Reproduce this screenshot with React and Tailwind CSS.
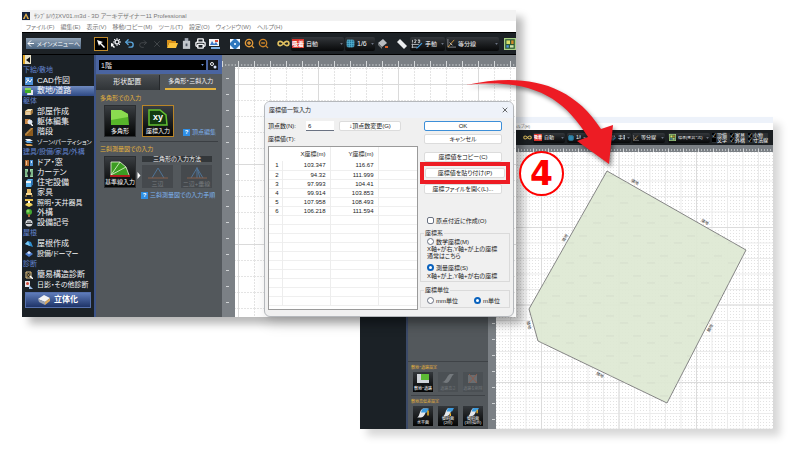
import React, { useState } from "react";
import {
  Settings,
  Undo2,
  Redo2,
  X,
  Printer,
  ZoomIn,
  ZoomOut,
  Infinity as InfinityIcon,
  Grid3x3,
} from "lucide-react";

const MENU = ["ファイル(F)", "編集(E)", "表示(V)", "移動/コピー(M)", "ツール(T)", "設定(O)", "ウィンドウ(W)", "ヘルプ(H)"];

const SIDEBAR = [
  {
    title: "下絵/敷地",
    items: [
      { label: "CAD作図", icon: "cad" },
      { label: "敷地/道路", icon: "site", active: true },
    ],
  },
  {
    title: "躯体",
    items: [
      { label: "部屋作成", icon: "room" },
      { label: "躯体編集", icon: "frame" },
      { label: "階段", icon: "stairs" },
      { label: "ゾーン/パーティション", icon: "zone", size: "text-[6px]" },
    ],
  },
  {
    title: "建具/設備/家具/外構",
    items: [
      { label: "ドア・窓", icon: "door" },
      { label: "カーテン", icon: "curtain" },
      { label: "住宅設備", icon: "bath" },
      { label: "家具", icon: "chair" },
      { label: "照明・天井器具", icon: "lamp", size: "text-[7px]" },
      { label: "外構", icon: "tree" },
      { label: "設備記号", icon: "outlet" },
    ],
  },
  {
    title: "屋根",
    items: [
      { label: "屋根作成", icon: "roof" },
      { label: "設備/ドーマー", icon: "dormer", size: "text-[7px]" },
    ],
  },
  {
    title: "診断",
    items: [
      { label: "簡易構造診断", icon: "structure" },
      { label: "日影・その他診断", icon: "shade", size: "text-[7px]" },
    ],
  },
];

const GLYPHS = {
  cad: (
    <>
      <path d="M0 0h8v8H0z" fill="#4d8fd6" />
      <path d="M1 6l2-3 2 2 2-3M1 2h3" stroke="#fff" fill="none" />
    </>
  ),
  site: (
    <>
      <path d="M3 3h5v5H2z" fill="#e5e7eb" />
      <path d="M0 1h6v5H0z" fill="#3fae2a" />
      <path d="M0 1h6v2H0z" fill="#86d858" />
    </>
  ),
  room: (
    <>
      <path d="M0 3 3 1h5L6 3z" fill="#f7e7c0" />
      <path d="M0 3h6v4H0z" fill="#d8b070" />
      <path d="M6 3l2-2v4L6 7z" fill="#9a7038" />
      <path d="M2 4v3M4 4v3" stroke="#fff" strokeWidth=".7" />
    </>
  ),
  frame: (
    <>
      <path d="M0 1h5v5H0z" fill="#c98a4a" />
      <circle cx="5" cy="4" r="2" fill="#dbeafe" stroke="#f3f4f6" />
      <path d="M6 6l2 2" stroke="#fff" strokeWidth="1.5" />
    </>
  ),
  stairs: (
    <>
      <path d="M0 8V6h2V4h2V2h2V0h2v8z" fill="#8a5a1e" />
      <path d="M0 6h2V4h2V2h2V0h2" stroke="#d8a050" fill="none" />
    </>
  ),
  zone: (
    <>
      <path d="M0 1h5l3 2H2z" fill="#f3f4f6" />
      <path d="M0 3h5l3 2H2z" fill="#5ba6e6" />
      <path d="M0 6h5l3 1-1 1H2z" fill="#e0a050" />
    </>
  ),
  door: (
    <>
      <path d="M0 1h4v6H0z" fill="#b06a32" />
      <path d="M1 2h1v4H1z" fill="#f0c090" />
      <path d="M5 1h3v6H5z" fill="#4c8fd0" />
      <path d="M6 2h1v2H6z" fill="#dbeafe" />
    </>
  ),
  curtain: (
    <>
      <path d="M0 0h3v2L2 4l1 4H0z" fill="#9fd8a8" />
      <path d="M8 0H5v2l1 2-1 4h3z" fill="#9fd8a8" />
      <path d="M1 1v6M7 1v6" stroke="#3f7f50" strokeWidth=".7" />
    </>
  ),
  bath: (
    <>
      <path d="M1 2 3 0h5v5L6 8H1z" fill="#5fb4ec" />
      <path d="M1 2h5v2H1z" fill="#f3f4f6" />
      <path d="M6 2l2-2v5L6 8z" fill="#2a6faf" />
    </>
  ),
  chair: (
    <>
      <path d="M2 0h4v4H2z" fill="#e6b860" />
      <path d="M1 4h6v2H1z" fill="#f7dc98" />
      <path d="M1 6v2M7 6v2" stroke="#d09a40" />
    </>
  ),
  lamp: (
    <>
      <path d="M0 0h8v2H0z" fill="#e8c050" />
      <path d="M3 2h2v2H3z" fill="#fff" />
      <path d="M2 4h4l2 2-4 2-4-2z" fill="#f5d860" />
    </>
  ),
  tree: (
    <>
      <circle cx="4" cy="3" r="3" fill="#43a830" />
      <circle cx="3" cy="2" r="1.500" fill="#8ad860" />
      <path d="M3 5h2v3H3z" fill="#a06a30" />
    </>
  ),
  outlet: (
    <>
      <circle cx="4" cy="4" r="3.500" fill="#d8dadd" />
      <path d="M1 4h6v1H1z" fill="#2b2f33" />
      <path d="M3 2v2M5 2v2" stroke="#2b2f33" strokeWidth=".8" />
    </>
  ),
  roof: (
    <>
      <path d="M0 4 3 1l3 1 2 5-3-1z" fill="#2f8fd0" />
      <path d="M0 4 3 1l2 5z" fill="#7cc8f4" />
    </>
  ),
  dormer: (
    <>
      <path d="M0 4 4 1l4 3-4 3z" fill="#4f7fd0" />
      <path d="M2 3l2-2 2 2-2 1z" fill="#dbe6fa" />
    </>
  ),
  structure: (
    <>
      <path d="M1 1h5v6H1z" fill="none" stroke="#e0c890" />
      <path d="M1 1l5 6M6 1 1 7" stroke="#d0a050" strokeWidth=".7" />
      <path d="M5 5l3 3" stroke="#fff" strokeWidth="1.5" />
    </>
  ),
  shade: (
    <>
      <path d="M0 0h5v6H0z" fill="#e5e7eb" />
      <circle cx="2.500" cy="2.500" r="1.500" fill="#d04838" />
      <path d="M4 4l4 4H4z" fill="#9fc0e8" />
    </>
  ),
};

const POINTS = [
  ["103.347", "116.67"],
  ["94.32", "111.999"],
  ["97.993", "104.41"],
  ["99.914", "103.853"],
  ["107.958", "108.493"],
  ["106.218", "111.594"],
];

const CHECKS = [
  ["設備", "文字"],
  ["家具", "外構"],
  ["小物", "寸法線"],
];

const EDGE_LABELS = [
  { x: 139, y: 30, r: 30 },
  { x: 209, y: 70, r: 30 },
  { x: 69, y: 86, r: -60 },
  { x: 214, y: 176, r: -62 },
  { x: 33, y: 173, r: 75 },
  { x: 104, y: 223, r: 27 },
];

function IconButton({ label, active, dim, color = "text-gray-100", children }) {
  return (
    <button
      type="button"
      aria-label={label}
      className={`flex h-[14px] w-[14px] shrink-0 items-center justify-center ${
        active ? "border border-[#c08a2c] bg-black" : ""
      } ${dim ? "opacity-20" : ""} ${color}`}
    >
      {children}
    </button>
  );
}

function ToolSelect({ label, value, icon, className }) {
  return (
    <label className={`flex shrink-0 items-center gap-[2px] rounded-xs bg-linear-to-b from-[#33373b] to-[#08090a] px-px text-gray-100 ${className}`}>
      {icon}
      <select aria-label={label} className="min-w-0 flex-1 appearance-none leading-none outline-none">
        <option>{value}</option>
      </select>
      <svg viewBox="0 0 4 3" className="h-[2px] w-[3px] shrink-0 fill-gray-500">
        <path d="M0 0h4L2 3z" />
      </svg>
    </label>
  );
}

function SnapBadge({ small }) {
  return (
    <span
      className={`flex shrink-0 items-center justify-center bg-[#d9342b] leading-none font-bold text-white ${
        small ? "h-[7px] w-[8px] text-[4px]" : "h-[9px] w-[12px] text-[6px]"
      }`}
    >
      吸着
    </span>
  );
}

function DimensionIcon({ className }) {
  return (
    <svg viewBox="0 0 12 11" className={className} fill="none">
      <path d="M1 1v3M3 1h2v1L3 4h2M7 1h2v3H7M7 2h2" stroke="#e5e7eb" strokeWidth=".8" />
      <path d="M0 6h8M0 9h6M1 5v5" stroke="#b8bcc0" />
      <path d="M11 4 6 9l-1 2 2-1 5-5z" fill="#3b9be0" />
    </svg>
  );
}

function DivideIcon({ className }) {
  return (
    <svg viewBox="0 0 10 10" className={className} fill="none">
      <path d="M1 0v9h9" stroke="#8b8f94" />
      <path d="M1 9 8 1" stroke="#e0a040" />
      <path d="M3 4l3 3" stroke="#d1d5db" />
    </svg>
  );
}

function PlanIcon({ className }) {
  return (
    <svg viewBox="0 0 10 10" className={className}>
      <rect width="10" height="10" fill="#a9cf86" />
      <rect x="1" y="1" width="8" height="8" fill="#2d5a35" />
      <rect x="2" y="2" width="3" height="3" fill="#d8e06a" />
      <rect x="6" y="2" width="2" height="3" fill="#d48a2a" />
      <rect x="2" y="6" width="2" height="2" fill="#4f94d8" />
      <rect x="5" y="6" width="3" height="2" fill="#cfe3a8" />
    </svg>
  );
}

function HorizontalRuler({ id, step, height, className }) {
  const minor = step / 5;
  return (
    <svg className={`block w-full bg-[#7b8085] ${className}`}>
      <defs>
        <pattern id={id} width={step} height={height} patternUnits="userSpaceOnUse">
          <path d={`M.5 ${height / 2}v${height / 2}`} stroke="#d5d8da" />
          <path
            d={[1, 2, 3, 4].map((n) => `M${n * minor + 0.5} ${height - 3}v2`).join("")}
            stroke="#b9bdc0"
          />
        </pattern>
      </defs>
      <rect width="100%" height="100%" fill={`url(#${id})`} />
    </svg>
  );
}

function VerticalRuler({ id, className }) {
  return (
    <svg className={`block shrink-0 bg-[#7b8085] ${className}`}>
      <defs>
        <pattern id={id} width="14" height="16" patternUnits="userSpaceOnUse">
          <path d="M4 11.500h3" stroke="#cfd2d4" />
        </pattern>
      </defs>
      <rect width="100%" height="100%" fill={`url(#${id})`} />
    </svg>
  );
}

function Sidebar() {
  return (
    <nav className="flex w-[72px] shrink-0 flex-col bg-[#1b2126] pb-[9px]">
      <div className="h-[10px]">
        <button type="button" aria-label="折りたたむ" className="ml-px flex h-[9px] w-[8px] items-center bg-[#e8e2c8]">
          <span className="h-full w-[2px] bg-[#e0a520]"></span>
          <svg viewBox="0 0 4 6" className="ml-px h-[6px] w-[4px]">
            <path d="M4 0v6L0 3z" fill="#111" />
          </svg>
        </button>
      </div>
      {SIDEBAR.map((group) => (
        <section key={group.title}>
          <h2 className="flex h-[11px] items-center pl-px text-[7px] whitespace-nowrap text-[#6384cf]">{group.title}</h2>
          {group.items.map(({ label, icon, active, size = "text-[8px]" }) => (
            <button
              key={label}
              type="button"
              className={`flex h-[10px] w-full items-center gap-[4px] pl-[3px] whitespace-nowrap text-gray-100 ${
                active ? "bg-linear-to-b from-[#6f8ac0] to-[#2e4984]" : ""
              } ${size}`}
            >
              <svg viewBox="0 0 8 8" className="h-[8px] w-[8px] shrink-0">
                {GLYPHS[icon]}
              </svg>
              {label}
            </button>
          ))}
        </section>
      ))}
      <button
        type="button"
        className="mx-[3px] mt-[2px] flex h-[16px] items-center justify-center gap-[4px] border border-[#5570ac] bg-linear-to-b from-[#5f7cba] to-[#1f3468] text-[8px] font-bold text-white"
      >
        <svg viewBox="0 0 12 10" className="h-[10px] w-[12px]">
          <path d="M0 4 6 0l6 3-5 4z" fill="#f3f4f6" />
          <path d="M0 4l7 3v3L1 7z" fill="#9ca3af" />
          <path d="M7 7l5-4v3l-5 4z" fill="#d8a860" />
        </svg>
        立体化
      </button>
    </nav>
  );
}

function HelpLink({ children }) {
  return (
    <a href="#help" className="flex items-center gap-[2px] text-[6px] whitespace-nowrap text-[#7db2ee]">
      <span className="flex h-[7px] w-[7px] items-center justify-center bg-[#2f8fe6] text-[6px] font-bold text-white">?</span>
      {children}
    </a>
  );
}

function ToolTile({ label, active, children }) {
  return (
    <button
      type="button"
      className={`flex h-[32px] w-[32px] shrink-0 flex-col items-center justify-between border bg-linear-to-b from-[#3a3e42] to-[#050606] pt-[3px] pb-[2px] text-[6px] leading-none whitespace-nowrap text-white ${
        active ? "border-[#b98528]" : "border-[#2b2e31]"
      }`}
    >
      {children}
      {label}
    </button>
  );
}

function InputPanel() {
  return (
    <div className="flex w-[128px] shrink-0 flex-col border-l-2 border-[#3d5488] bg-[#53585c]">
      <div className="flex h-[19px] items-center gap-[2px] bg-[#4a64a0] px-[3px] pt-px">
        <label className="flex h-[10px] min-w-0 flex-1 items-center bg-black px-[2px]">
          <select aria-label="階" className="min-w-0 flex-1 appearance-none text-[7px] leading-none text-gray-200">
            <option>1階</option>
          </select>
          <svg viewBox="0 0 4 3" className="h-[2px] w-[3px] fill-[#6b8fd0]">
            <path d="M0 0h4L2 3z" />
          </svg>
        </label>
        <button type="button" aria-label="階の設定" className="mr-px flex h-[10px] w-[10px] items-center justify-center bg-[#15181b]">
          <svg viewBox="0 0 8 8" className="h-[8px] w-[8px]" fill="none">
            <circle cx="3" cy="3" r="1.500" stroke="#f3f4f6" />
            <circle cx="6" cy="6" r="1.500" fill="#dbe6fa" />
          </svg>
        </button>
      </div>
      <div role="tablist" className="mt-px flex h-[15px] bg-[#3a3e42] text-gray-100">
        <button
          role="tab"
          aria-selected="false"
          type="button"
          className="flex-1 border-r border-[#26292c] bg-linear-to-b from-[#4a4e52] to-[#303437] text-[7px] whitespace-nowrap"
        >
          形状配置
        </button>
        <button
          role="tab"
          aria-selected="true"
          type="button"
          className="flex flex-1 flex-col items-center justify-between bg-[#53585c] pt-[2px] text-[6px] whitespace-nowrap"
        >
          <span>多角形・三斜入力</span>
          <span className="h-[2px] w-[51px] bg-[#e3b23c]"></span>
        </button>
      </div>
      <div className="flex flex-col px-[4px] pt-[4px]">
        <h3 className="h-[11px] text-[6px] leading-[9px] text-[#e3b23c]">多角形での入力</h3>
        <div className="flex items-end gap-[6px] pl-[4px]">
          <ToolTile label="多角形">
            <svg viewBox="0 0 20 17" className="h-[17px] w-[20px]">
              <path d="M1 1h10l7 4 1 11H1z" fill="#57b52a" />
              <path d="M1 1h10l7 4v3L1 11z" fill="#8bdc50" />
            </svg>
          </ToolTile>
          <ToolTile label="座標入力" active>
            <span className="relative flex h-[17px] w-[20px] items-center justify-center">
              <svg viewBox="0 0 20 17" className="absolute inset-0 h-full w-full">
                <path d="M1 1h11l6 5 1 10H1z" fill="#123a10" stroke="#62c030" strokeWidth="1.5" />
              </svg>
              <b className="relative text-[9px]">xy</b>
            </span>
          </ToolTile>
          <div className="ml-[3px] -mr-[2px]">
            <HelpLink>頂点編集</HelpLink>
          </div>
        </div>
        <div className="mt-[4px] border-t border-[#3b3f43] pt-[3px]">
          <h3 className="h-[11px] text-[6px] leading-[9px] text-[#e3b23c]">三斜測量図での入力</h3>
        </div>
        <div className="flex pl-[4px]">
          <ToolTile label="基準線入力">
            <svg viewBox="0 0 20 17" className="h-[17px] w-[20px]">
              <path d="M1 2h9l6 5 3 8H1z" fill="#3c9c22" />
              <path d="M1 15 10 2M1 15 16 7M1 15V2h9l6 5 3 8" stroke="#e8f5d8" strokeWidth=".8" fill="none" />
              <path d="M0 16h20" stroke="#e02020" strokeWidth="1.5" />
            </svg>
          </ToolTile>
          <svg viewBox="0 0 3 7" className="mx-px mt-[16px] h-[7px] w-[4px] shrink-0 fill-white">
            <path d="M0 0l3 3.500L0 7z" />
          </svg>
          <div className="flex w-[70px] flex-col gap-[3px]">
            <div className="bg-[#33373a] text-center text-[6px] leading-[6px] text-gray-100">三角形の入力方法</div>
            <div className="flex justify-between">
              {["三辺", "二辺+垂線"].map((label, i) => (
                <button
                  key={label}
                  type="button"
                  disabled
                  className="flex h-[23px] w-[31px] flex-col items-center justify-between bg-[#45494d] pt-px text-[6px] leading-[8px] whitespace-nowrap text-[#777b7f]"
                >
                  <svg viewBox="0 0 22 13" className="h-[13px] w-[22px]" fill="none">
                    <path d="M5 12 11 2l6 10" stroke="#4f7396" />
                    {i === 1 && <path d="M11 1v11M11 2l3 10" stroke="#4f7396" />}
                    <path d="M1 12h20" stroke="#86604c" />
                  </svg>
                  {label}
                </button>
              ))}
            </div>
          </div>
        </div>
        <div className="mt-[3px] ml-[41px]">
          <HelpLink>三斜測量図での入力手順</HelpLink>
        </div>
      </div>
    </div>
  );
}

function Choice({ type, name, label, checked, onChange }) {
  return (
    <label className="flex h-[9px] items-center gap-[2px] whitespace-nowrap">
      <input
        type={type}
        name={name}
        checked={checked}
        onChange={onChange}
        className={`h-[7px] w-[7px] shrink-0 appearance-none border border-gray-500 bg-white checked:border-2 checked:border-[#0a62bd] ${
          type === "radio" ? "rounded-full" : "rounded-xs"
        }`}
      />
      {label}
    </label>
  );
}

function DialogButton({ primary, children }) {
  return (
    <button
      type="button"
      className={`h-[10px] w-full rounded-xs border bg-white text-[6px] leading-none whitespace-nowrap ${
        primary ? "border-[#3d8fd8]" : "border-[#dcdcdc]"
      }`}
    >
      {children}
    </button>
  );
}

function CoordinateDialog() {
  const [count, setCount] = useState("6");
  const [nearOrigin, setNearOrigin] = useState(false);
  const [system, setSystem] = useState("survey");
  const [unit, setUnit] = useState("m");

  return (
    <div
      role="dialog"
      aria-label="座標値一覧入力"
      className="absolute top-[91px] right-[2px] flex w-[250px] flex-col overflow-hidden rounded-md border border-[#b5b8bc] bg-[#f0f0f0] text-[6px] leading-none text-[#222] shadow-lg"
    >
      <div className="flex h-[16px] items-center justify-between bg-[#eef2f9] px-[4px]">
        <span>座標値一覧入力</span>
        <button type="button" aria-label="閉じる">
          <X size={8} />
        </button>
      </div>
      <div className="flex justify-between px-[3px] pt-[3px] pb-[6px]">
        <div className="w-[150px]">
          <div className="flex h-[10px] items-center">
            <label htmlFor="count" className="w-[38px] whitespace-nowrap">
              頂点数(N):
            </label>
            <input
              id="count"
              value={count}
              onChange={(e) => setCount(e.target.value)}
              className="h-[10px] w-[28px] border-b border-gray-500 bg-white px-[2px] outline-none"
            />
            <div className="ml-[5px] w-[62px]">
              <DialogButton>↓頂点数変更(G)</DialogButton>
            </div>
          </div>
          <div className="flex h-[15px] items-center pt-px">座標値(T):</div>
          <div className="border border-[#9a9a9a] bg-white pb-[3px]">
            <table className="w-full table-fixed border-collapse text-right">
              <colgroup>
                <col className="w-[13px]" />
                <col className="w-[48px]" />
                <col className="w-[48px]" />
                <col />
              </colgroup>
              <thead>
                <tr className="h-[14px]">
                  <th></th>
                  <th className="border-r border-[#ededed] pr-[4px] font-normal whitespace-nowrap">X座標(m)</th>
                  <th className="border-r border-[#ededed] pr-[4px] font-normal whitespace-nowrap">Y座標(m)</th>
                  <th></th>
                </tr>
              </thead>
              <tbody>
                {Array.from({ length: 16 }, (_, i) => (
                  <tr key={i} className="h-[9px] border-b border-[#efefef]">
                    <td className="border-r border-[#ededed] pr-[3px]">{POINTS[i] ? i + 1 : ""}</td>
                    <td className="border-r border-[#ededed] pr-[4px]">{POINTS[i]?.[0]}</td>
                    <td className="border-r border-[#ededed] pr-[4px]">{POINTS[i]?.[1]}</td>
                    <td></td>
                  </tr>
                ))}
              </tbody>
            </table>
          </div>
        </div>
        <div className="flex w-[90px] flex-col">
          <div className="flex flex-col gap-[3px] pr-[8px] pl-[4px]">
            <DialogButton primary>OK</DialogButton>
            <DialogButton>キャンセル</DialogButton>
          </div>
          <div className="mt-[8px] pr-[8px] pl-[4px]">
            <DialogButton>座標値をコピー(C)</DialogButton>
          </div>
          <div className="border-4 border-[#ed1c24] px-px py-[2px]">
            <DialogButton>座標値を貼り付け(P)</DialogButton>
          </div>
          <div className="pr-[8px] pl-[4px]">
            <DialogButton>座標ファイルを開く(L)...</DialogButton>
          </div>
          <div className="mt-[22px] ml-[7px]">
            <Choice type="checkbox" label="原点付近に作成(O)" checked={nearOrigin} onChange={() => setNearOrigin(!nearOrigin)} />
          </div>
          <fieldset className="mt-[4px] border border-[#dadada] px-[6px] pb-px">
            <legend className="-ml-[3px] h-[8px] px-px leading-[8px]">座標系</legend>
            <Choice type="radio" name="system" label="数学座標(M)" checked={system === "math"} onChange={() => setSystem("math")} />
            <p className="leading-[7px] whitespace-nowrap">
              X軸+が右,Y軸+が上の座標
              <br />
              通常はこちら
            </p>
            <div className="mt-[3px]">
              <Choice type="radio" name="system" label="測量座標(S)" checked={system === "survey"} onChange={() => setSystem("survey")} />
            </div>
            <p className="leading-[8px] whitespace-nowrap">X軸+が上,Y軸+が右の座標</p>
          </fieldset>
          <fieldset className="mt-[4px] border border-[#dadada] px-[6px] pb-[2px]">
            <legend className="-ml-[3px] h-[8px] px-px leading-[8px]">座標単位</legend>
            <div className="flex gap-[16px] pt-[2px]">
              <Choice type="radio" name="unit" label="mm単位" checked={unit === "mm"} onChange={() => setUnit("mm")} />
              <Choice type="radio" name="unit" label="m単位" checked={unit === "m"} onChange={() => setUnit("m")} />
            </div>
          </fieldset>
        </div>
      </div>
    </div>
  );
}

function EditorToolbar() {
  return (
    <div className="flex h-[23px] items-center overflow-hidden border-y border-black bg-[#1d2226] pl-[4px]">
      <button
        type="button"
        className="mr-[13px] flex h-[11px] w-[55px] shrink-0 items-center justify-between bg-linear-to-b from-[#93a5b8] to-[#4c6580] px-px text-[6px] leading-none whitespace-nowrap text-white"
      >
        <svg viewBox="0 0 7 7" className="h-[7px] w-[7px]" fill="none" stroke="#fff">
          <path d="M7 3.500H1M4 .5l-3 3 3 3" />
        </svg>
        メインメニューへ
      </button>
      <IconButton label="選択" active>
        <svg viewBox="0 0 10 10" className="h-[10px] w-[10px] fill-white">
          <path d="M1 1l6 2-2 1 4 4-1 1-4-4-1 2z" />
        </svg>
      </IconButton>
      <IconButton label="選択設定">
        <svg viewBox="0 0 11 11" className="h-[11px] w-[11px]" fill="none" stroke="#e5e7eb">
          <circle cx="7" cy="4" r="2" strokeWidth="1.500" />
          <path d="M7 0v1M7 7v1M3 4h1M10 4h1M5 2l-1-1M9 6l1 1M9 2l1-1" />
          <path d="M1 5l3 1-1 1 2 2-1 1-2-2-1 1z" fill="#fff" stroke="none" />
        </svg>
      </IconButton>
      <IconButton label="元に戻す" color="text-[#5aa3d8]">
        <Undo2 size={11} strokeWidth={3} />
      </IconButton>
      <IconButton label="やり直し" dim>
        <Redo2 size={10} />
      </IconButton>
      <IconButton label="削除" dim>
        <X size={10} />
      </IconButton>
      <div className="ml-px flex">
        <IconButton label="開く">
          <svg viewBox="0 0 12 10" className="h-[10px] w-[12px]">
            <path d="M1 1h4l1 1h4v2H3L1 9z" fill="#d8901a" />
            <path d="M3 4h9l-2 5H1z" fill="#fbc23c" />
          </svg>
        </IconButton>
        <IconButton label="保存">
          <svg viewBox="0 0 10 12" className="h-[11px] w-[9px]">
            <rect x="3" width="4" height="4" fill="#9ca3af" />
            <rect x="1" y="3" width="8" height="9" fill="#c3c7cc" />
            <rect x="4" y="6" width="2" height="3" fill="#4b5563" />
          </svg>
        </IconButton>
        <IconButton label="印刷">
          <Printer size={11} strokeWidth={3} />
        </IconButton>
        <IconButton label="画像">
          <svg viewBox="0 0 11 11" className="h-[11px] w-[11px]">
            <rect y="1" width="10" height="7" fill="#f3f4f6" />
            <path d="M1 7l2-4 2 3 2-2 2 3z" fill="#3c78c8" />
            <path d="M6 2h3v2H6z" fill="#d84a3a" />
            <path d="M2 9h9v2H2z" fill="#7fb0e4" />
          </svg>
        </IconButton>
      </div>
      <div className="ml-[7px] flex">
        <IconButton label="全体表示">
          <svg viewBox="0 0 10 10" className="h-[10px] w-[10px]">
            <rect width="10" height="10" fill="#2f78bf" />
            <path d="M0 0h4L0 4zM10 0v4L6 0zM0 10V6l4 4zM10 10H6l4-4z" fill="#f3f8ff" />
            <path d="M4 4h2v2H4z" fill="#cfe3f7" />
          </svg>
        </IconButton>
        <IconButton label="拡大" color="text-[#e39a3a]">
          <ZoomIn size={11} strokeWidth={3} />
        </IconButton>
        <IconButton label="縮小" color="text-[#c98228]">
          <ZoomOut size={11} strokeWidth={3} />
        </IconButton>
      </div>
      <div className="ml-[6px] flex items-center gap-px">
        <IconButton label="連続" color="text-[#e0c060]">
          <InfinityIcon size={13} strokeWidth={3} />
        </IconButton>
        <ToolSelect label="吸着" value="自動" icon={<SnapBadge />} className="h-[14px] w-[53px] text-[6px]" />
        <ToolSelect
          label="グリッド"
          value="1/6"
          icon={<Grid3x3 size={9} fill="#1f6f94" className="shrink-0 text-[#5bb5d6]" />}
          className="h-[14px] w-[30px] text-[7px]"
        />
        <IconButton label="消去">
          <svg viewBox="0 0 11 11" className="h-[11px] w-[11px]">
            <path d="M0 5 5 1l4 4-5 4z" fill="#b8bcc0" />
            <path d="M0 5l4 4v2L0 7z" fill="#74797d" />
            <path d="M7 8h3v2H7z" fill="#d8602a" />
          </svg>
        </IconButton>
      </div>
      <div className="ml-[5px] flex items-center gap-px">
        <IconButton label="定規">
          <svg viewBox="0 0 10 10" className="h-[10px] w-[10px]">
            <path d="M0 3 3 0l7 7-3 3z" fill="#eceef0" />
          </svg>
        </IconButton>
        <ToolSelect label="寸法" value="手動" icon={<DimensionIcon className="h-[10px] w-[12px] shrink-0" />} className="h-[14px] w-[35px] text-[6px]" />
        <ToolSelect label="補助線" value="等分線" icon={<DivideIcon className="h-[9px] w-[9px] shrink-0" />} className="h-[14px] w-[53px] text-[6px]" />
      </div>
      <div className="ml-[5px] shrink-0">
        <PlanIcon className="h-[12px] w-[12px]" />
      </div>
    </div>
  );
}

function EditorWindow() {
  return (
    <section className="absolute top-[10px] right-[284px] left-[22px] bg-white shadow-[7px_7px_8px_rgba(0,0,0,0.28)]">
      <header className="flex h-[11px] items-center gap-[4px] bg-[#f2f2f2] text-[6px] leading-none text-[#777]">
        <svg viewBox="0 0 9 9" className="h-[8px] w-[8px]">
          <rect width="9" height="9" fill="#16233c" />
          <path d="M1 8 4.500 1 8 8H6L4.500 4 3 8z" fill="#e2b04a" />
        </svg>
        <span className="whitespace-nowrap">ｻﾝﾌﾟﾙﾊｳｽXV01.m3d - 3D アーキデザイナー11 Professional</span>
      </header>
      <div className="flex h-[11px] items-center gap-[6px] pl-[4px] text-[6px] leading-none whitespace-nowrap text-[#777]">
        {MENU.map((m) => (
          <button key={m} type="button">
            {m}
          </button>
        ))}
      </div>
      <EditorToolbar />
      <div className="flex">
        <Sidebar />
        <InputPanel />
        <div className="flex min-w-0 flex-1 flex-col">
          <HorizontalRuler id="editor-ruler" step={16} height={12} className="h-[12px]" />
          <div className="flex min-h-0 flex-1">
            <VerticalRuler id="editor-ruler-v" className="h-full w-[13px]" />
            <svg className="h-full w-full min-w-0 flex-1 bg-white">
              <defs>
                <pattern id="editor-grid" x="3" y="17" width="16" height="16" patternUnits="userSpaceOnUse">
                  <path d="M.5 0v16M0 .5h16" stroke="#e4e4e4" strokeDasharray="2 1" />
                </pattern>
                <pattern id="editor-grid-major" x="3" y="17" width="80" height="80" patternUnits="userSpaceOnUse">
                  <path d="M.5 0v80M0 .5h80" stroke="#dadada" />
                </pattern>
              </defs>
              <rect width="100%" height="100%" fill="url(#editor-grid)" />
              <rect width="100%" height="100%" fill="url(#editor-grid-major)" />
            </svg>
          </div>
        </div>
      </div>
      <CoordinateDialog />
    </section>
  );
}

function SmallTile({ lines, disabled, children }) {
  return (
    <button
      type="button"
      disabled={disabled}
      className={`flex h-[20px] w-[20px] flex-col items-center justify-between py-px text-[4px] leading-[4px] whitespace-nowrap ${
        disabled ? "bg-[#4b5054] text-[#71767a]" : "bg-linear-to-b from-[#34383c] to-[#050606] text-white"
      }`}
    >
      {children}
      <span>
        {lines.map((l) => (
          <span key={l} className="block">
            {l}
          </span>
        ))}
      </span>
    </button>
  );
}

function SlopeIcon({ dot, tall }) {
  return (
    <svg viewBox="0 0 14 11" className={tall ? "h-[12px] w-[14px]" : "h-[10px] w-[13px]"}>
      <path d="M1 10c3-1 2-7 6-9h5c-3 2-2 8-7 9z" fill="#e5e7eb" />
      <path d="M6 2c1-1 1-1 2-1h5l-2 4H5z" fill="#3b9be0" />
      <path d={dot} stroke="#f0b429" strokeWidth="1.500" />
    </svg>
  );
}

function SitePlan() {
  return (
    <svg viewBox="0 0 277 277" preserveAspectRatio="xMinYMin slice" className="block h-[277px] w-full min-w-0 flex-1 bg-white">
      <defs>
        <pattern id="site-dots" width="3" height="3" patternUnits="userSpaceOnUse">
          <rect width="1" height="1" fill="#e2e2e2" />
        </pattern>
        <pattern id="site-grid" x="14" y="13" width="15.500" height="15.500" patternUnits="userSpaceOnUse">
          <path d="M.5 0v16M0 .5h16" stroke="#ebebeb" />
        </pattern>
        <pattern id="site-grid-major" x="45" y="75" width="77.500" height="77.500" patternUnits="userSpaceOnUse">
          <path d="M.5 0v78M0 .5h78" stroke="#dcdcdc" />
        </pattern>
        <pattern id="site-fill" width="27" height="20" patternUnits="userSpaceOnUse">
          <path d="M2 4h8M16 11h8" stroke="#d0d9c9" strokeWidth=".7" />
        </pattern>
      </defs>
      <rect width="100%" height="100%" fill="url(#site-dots)" />
      <rect width="100%" height="100%" fill="url(#site-grid)" />
      <rect width="100%" height="100%" fill="url(#site-grid-major)" />
      <path d="M111 19l139 79-79 153L42 189l-9-32z" fill="#dde8d3" fillOpacity=".92" stroke="#858585" />
      <path d="M111 19l139 79-79 153L42 189l-9-32z" fill="url(#site-fill)" />
      {EDGE_LABELS.map((l) => (
        <text
          key={`${l.x}-${l.y}`}
          x={l.x}
          y={l.y}
          fontSize="4"
          fill="#333"
          textAnchor="middle"
          dominantBaseline="central"
          transform={`rotate(${l.r} ${l.x} ${l.y})`}
        >
          隣地
        </text>
      ))}
    </svg>
  );
}

function ResultWindow() {
  return (
    <section className="absolute top-[117px] right-[27px] left-[360px] bg-white shadow-[7px_7px_8px_rgba(0,0,0,0.16)]">
      <header className="h-[6px] bg-[#edf2fa]"></header>
      <div className="flex h-[7px] items-center pl-[153px] text-[4px] leading-none text-[#777]">
        <button type="button">ヘルプ(H)</button>
      </div>
      <div className="flex h-[15px] items-center overflow-hidden bg-[#1b1f22] pl-[163px]">
        <InfinityIcon size={9} strokeWidth={3} className="mr-px shrink-0 text-[#e0c060]" />
        <ToolSelect label="吸着" value="自動" icon={<SnapBadge small />} className="mr-[2px] h-[10px] w-[32px] text-[5px]" />
        <ToolSelect
          label="グリッド"
          value="1/6"
          icon={<Grid3x3 size={6} fill="#1f6f94" className="shrink-0 text-[#3f9cc0]" />}
          className="mr-[22px] h-[10px] w-[20px] text-[5px]"
        />
        <ToolSelect label="寸法" value="手動" icon={<DimensionIcon className="h-[6px] w-[6px] shrink-0" />} className="mr-px h-[10px] w-[22px] text-[5px]" />
        <ToolSelect label="補助線" value="等分線" icon={<DivideIcon className="h-[6px] w-[6px] shrink-0" />} className="mr-[3px] h-[10px] w-[33px] text-[5px]" />
        <ToolSelect label="表示" value="標準(家具・法)" icon={<PlanIcon className="h-[7px] w-[7px] shrink-0" />} className="mr-[2px] h-[10px] w-[42px] text-[4px]" />
        <div className="flex gap-[3px] bg-[#2b2f32]">
          {CHECKS.map((col) => (
            <div key={col[0]}>
              {col.map((label) => (
                <label key={label} className="flex h-[5px] items-center gap-px text-[5px] leading-none whitespace-nowrap text-gray-100">
                  <input
                    type="checkbox"
                    defaultChecked={label !== "文字"}
                    className="flex h-[4px] w-[4px] appearance-none items-center justify-center bg-black text-[5px] leading-none before:content-[''] checked:before:content-['✓']"
                  />
                  {label}
                </label>
              ))}
            </div>
          ))}
        </div>
      </div>
      <div className="flex">
        <div className="w-[46px] shrink-0 bg-[#1b2126]"></div>
        <aside className="flex w-[82px] shrink-0 flex-col justify-end border-l-2 border-[#3b4a68] bg-[#53585c] pb-[3px]">
          <div className="border-t border-[#3f4347] px-[3px] py-[3px]">
            <h3 className="h-[7px] text-[4px] leading-[6px] text-[#e3b23c]">敷地・道路設定</h3>
            <div className="flex gap-[5px] pl-[2px]">
              <SmallTile lines={["敷地・道路"]}>
                <svg viewBox="0 0 14 11" className="h-[11px] w-[14px]">
                  <path d="M1 1h12v9H1z" fill="#d1d5db" />
                  <path d="M5 1h8v6H5z" fill="#5cba34" />
                </svg>
              </SmallTile>
              <SmallTile lines={["道路高さ"]} disabled>
                <svg viewBox="0 0 14 11" className="h-[11px] w-[14px]">
                  <path d="M1 9c4 0 5-7 8-8h4c-3 2-4 9-8 9z" fill="#74797d" />
                </svg>
              </SmallTile>
              <SmallTile lines={["道路を削除"]} disabled>
                <svg viewBox="0 0 14 11" className="h-[11px] w-[14px]">
                  <path d="M2 2h9v8H2z" fill="#686d71" />
                  <path d="M3 1l8 9M11 1l-8 9" stroke="#8d5b4b" />
                </svg>
              </SmallTile>
            </div>
          </div>
          <div className="mx-[3px] border-t border-[#3f4347] pt-[3px]">
            <h3 className="h-[7px] text-[4px] leading-[6px] text-[#e3b23c]">敷地高低差設定</h3>
            <div className="flex gap-[5px] pl-[2px]">
              <SmallTile lines={["水平面"]}>
                <SlopeIcon tall dot="M12 3v5" />
              </SmallTile>
              <SmallTile lines={["傾斜面", "(2点)"]}>
                <SlopeIcon dot="M9 7v3" />
              </SmallTile>
              <SmallTile lines={["傾斜面", "(3点指示)"]}>
                <SlopeIcon dot="M11 3v4" />
              </SmallTile>
            </div>
          </div>
        </aside>
        <div className="flex min-w-0 flex-1 flex-col">
          <HorizontalRuler id="site-ruler" step={15} height={7} className="h-[7px]" />
          <div className="flex">
            <VerticalRuler id="site-ruler-v" className="h-[277px] w-[8px]" />
            <SitePlan />
          </div>
        </div>
      </div>
    </section>
  );
}

export default function App() {
  return (
    <main
      lang="ja"
      className="relative min-h-screen overflow-hidden bg-white font-['Liberation_Sans','Noto_Sans_CJK_JP',sans-serif] [font-feature-settings:'palt']"
    >
      <ResultWindow />
      <EditorWindow />

      {/* step marker and arrow over both windows */}
      <svg
        viewBox="0 0 160 100"
        className="pointer-events-none absolute top-[70px] left-[460px] h-[100px] w-[160px] overflow-visible drop-shadow-[2px_3px_2px_rgba(0,0,0,0.45)]"
      >
        <path d="M6 15C60 3 110 10 141 59l12-4-4 39-32-23 11-4C103 27 72 8 6 15z" fill="#ed1c24" />
      </svg>
      <div className="absolute top-[151px] left-[519px] flex h-[45px] w-[45px] items-center justify-center rounded-full border-2 border-[#fe0000] bg-white font-['DejaVu_Sans'] text-[33px] leading-none font-bold text-[#fe0000]">
        4
      </div>
    </main>
  );
}
